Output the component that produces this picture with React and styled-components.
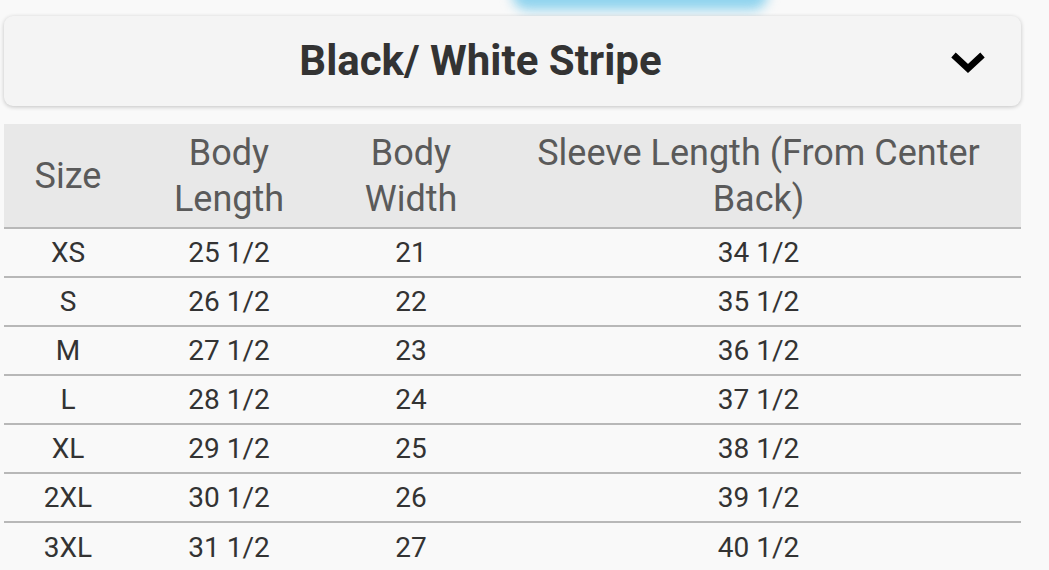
import React from 'react';
import styled, { createGlobalStyle } from 'styled-components';

const GlobalStyle = createGlobalStyle`
  html, body {
    margin: 0;
    padding: 0;
    background: #f9f9f9;
    font-family: Roboto, "Noto Sans", "Liberation Sans", sans-serif;
  }
`;

const Page = styled.div`
  position: relative;
  width: 1049px;
  height: 570px;
  overflow: hidden;
  padding: 16px 28px 0 4px;
  box-sizing: border-box;
`;

const Glow = styled.div`
  position: absolute;
  top: -22px;
  left: 512px;
  width: 256px;
  height: 32px;
  border-radius: 16px;
  background: #8fd3ee;
  filter: blur(6px);
`;

const Selector = styled.div`
  position: relative;
  height: 90px;
  display: flex;
  align-items: center;
  justify-content: center;
  background: #f4f4f4;
  border-radius: 9px;
  box-shadow: 0 1px 4px rgba(0, 0, 0, 0.22);
`;

const SelectorTitle = styled.div`
  font-size: 42px;
  font-weight: 700;
  color: #333;
  margin-left: -64px;
  margin-top: -2px;
`;

const Chevron = styled.svg`
  position: absolute;
  right: 35px;
  top: 34px;
  width: 36px;
  height: 24px;
`;

const Table = styled.div`
  margin-top: 18px;
  display: grid;
  grid-template-columns: 128px 194px 170px 1fr;
  color: #333;
`;

const HeadCell = styled.div`
  background: #e8e8e8;
  height: 105px;
  display: flex;
  align-items: center;
  justify-content: center;
  text-align: center;
  font-size: 36px;
  line-height: 46px;
  color: #5a5a5a;
  border-bottom: 2px solid #b8b8b8;
  box-sizing: border-box;
`;

const Cell = styled.div`
  height: 49px;
  display: flex;
  align-items: center;
  justify-content: center;
  font-size: 28px;
  color: #333;
  border-bottom: ${p => (p.last ? 'none' : '2px solid #b8b8b8')};
  box-sizing: border-box;
`;

const rows = [
  ['XS', '25 1/2', '21', '34 1/2'],
  ['S', '26 1/2', '22', '35 1/2'],
  ['M', '27 1/2', '23', '36 1/2'],
  ['L', '28 1/2', '24', '37 1/2'],
  ['XL', '29 1/2', '25', '38 1/2'],
  ['2XL', '30 1/2', '26', '39 1/2'],
  ['3XL', '31 1/2', '27', '40 1/2'],
];

export default function App() {
  return (
    <Page>
      <GlobalStyle />
      <Glow />
      <Selector>
        <SelectorTitle>Black/ White Stripe</SelectorTitle>
        <Chevron viewBox="0 0 36 24">
          <path d="M3.5 5 L18 18.5 L32.5 5" fill="none" stroke="#000" strokeWidth="6.5" />
        </Chevron>
      </Selector>
      <Table>
        <HeadCell>Size</HeadCell>
        <HeadCell>Body<br />Length</HeadCell>
        <HeadCell>Body<br />Width</HeadCell>
        <HeadCell>Sleeve Length (From Center<br />Back)</HeadCell>
        {rows.map((r, i) =>
          r.map((v, j) => (
            <Cell key={i + '-' + j} last={i === rows.length - 1}>{v}</Cell>
          ))
        )}
      </Table>
    </Page>
  );
}
